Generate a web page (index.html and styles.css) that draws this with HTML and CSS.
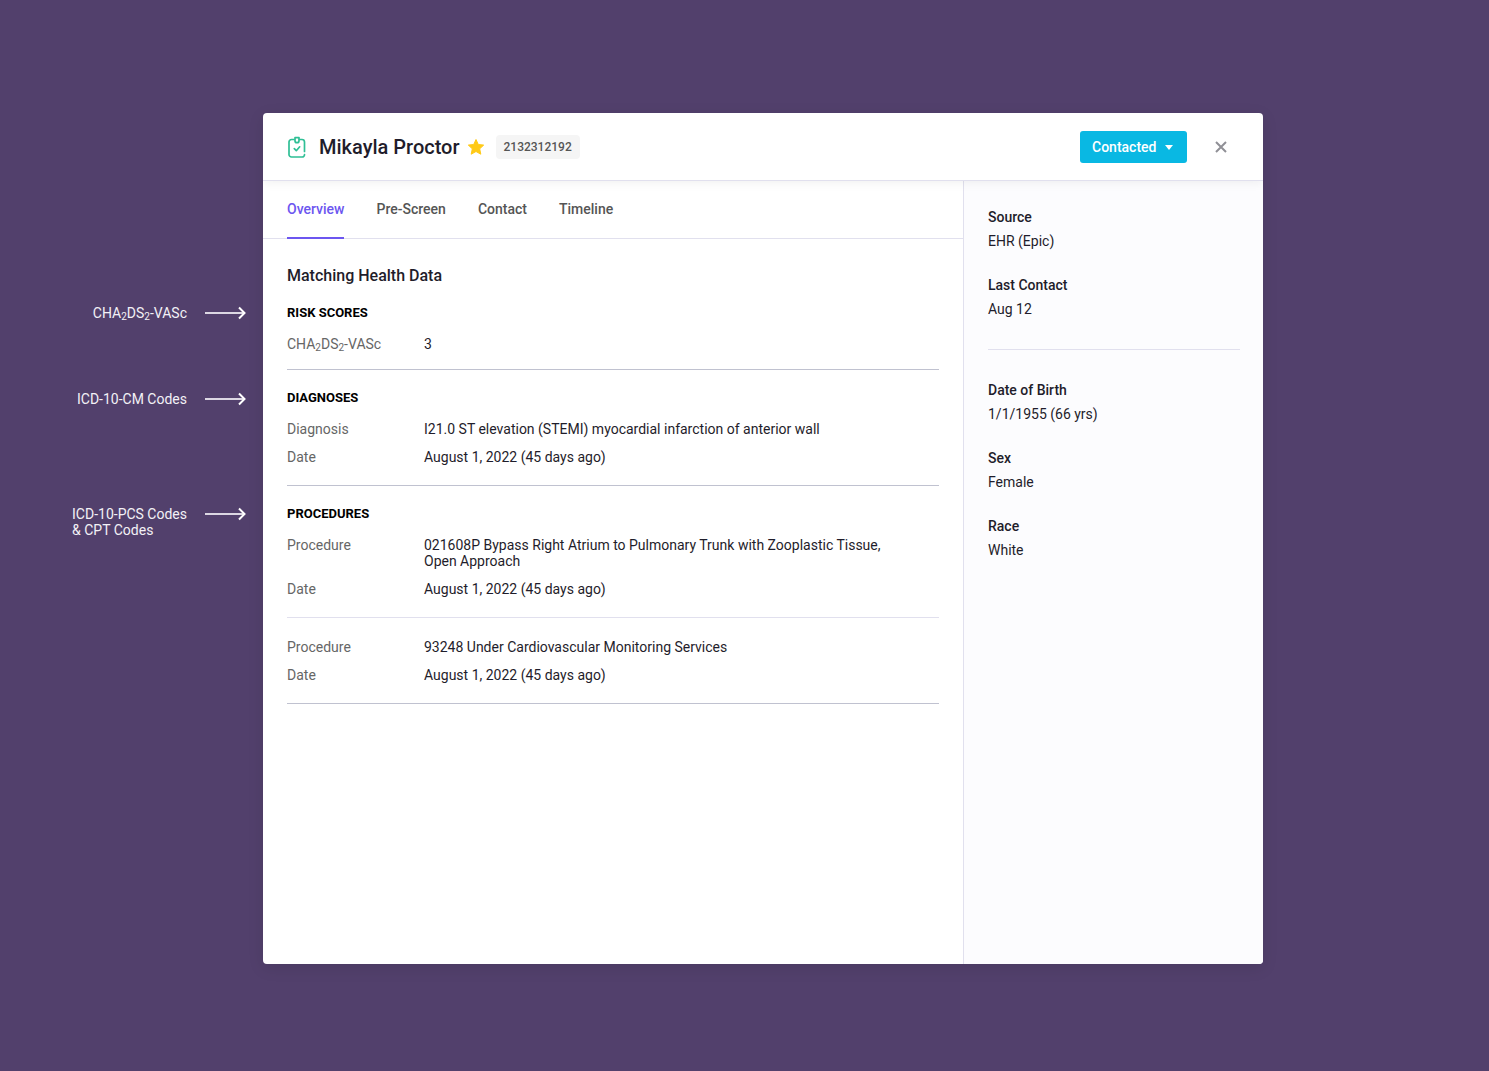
FILE: index.html
```html
<!DOCTYPE html>
<html lang="en">
<head>
    <meta charset="UTF-8">
    <meta name="viewport" content="width=device-width, initial-scale=1.0">
    <title>Mikayla Proctor</title>
    <link rel="stylesheet" href="styles.css">
</head>
<body>
    <aside class="notes">
        <div class="note">
            <p>CHA<sub>2</sub>DS<sub>2</sub>-VASc</p>
            <svg class="arrow" viewBox="0 0 42 16"><path class="shaft" d="M0 8h39"/><path d="M34 2.500 39.500 8 34 13.500"/></svg>
        </div>
        <div class="note">
            <p>ICD-10-CM Codes</p>
            <svg class="arrow" viewBox="0 0 42 16"><path class="shaft" d="M0 8h39"/><path d="M34 2.500 39.500 8 34 13.500"/></svg>
        </div>
        <div class="note">
            <p>ICD-10-PCS Codes<br>&amp; CPT Codes</p>
            <svg class="arrow" viewBox="0 0 42 16"><path class="shaft" d="M0 8h39"/><path d="M34 2.500 39.500 8 34 13.500"/></svg>
        </div>
    </aside>

    <div class="card">
        <header class="card-header">
            <svg class="clipboard" viewBox="0 0 20 22" width="20" height="22">
                <path d="M7 3.500H4.500A2.500 2.500 0 0 0 2 6v12.500A2.500 2.500 0 0 0 4.500 21h10.500a2.500 2.500 0 0 0 2.500-2.300M17.500 15.500V6A2.500 2.500 0 0 0 15 3.500H12.500"/>
                <path d="M8 1.700h4v3a2 2 0 0 1-4 0z"/>
                <path d="M7.300 12.700l2 2 3.400-3.900"/>
            </svg>
            <h1>Mikayla Proctor</h1>
            <svg class="star" viewBox="0 0 18 18" width="18" height="18">
                <path d="M9 1.500l2.300 5 5.400.6-4 3.700 1.100 5.400L9 13.500l-4.800 2.700 1.100-5.400-4-3.700 5.400-.6z"/>
            </svg>
            <span class="patient-id">2132312192</span>
            <div class="status">
                <select aria-label="Status">
                    <option>Contacted</option>
                </select>
                <svg viewBox="0 0 8 5" width="8" height="5"><path d="M0 0h8L4 5z"/></svg>
            </div>
            <button class="close" aria-label="Close">
                <svg viewBox="0 0 12 12" width="12" height="12"><path d="M1 1l10 10M11 1L1 11"/></svg>
            </button>
        </header>

        <div class="card-body">
            <main>
                <nav class="tabs">
                    <a href="#overview" class="active">Overview</a>
                    <a href="#pre-screen">Pre-Screen</a>
                    <a href="#contact">Contact</a>
                    <a href="#timeline">Timeline</a>
                </nav>
                <div class="content">
                    <h2>Matching Health Data</h2>
                    <section class="risk">
                        <h3>Risk Scores</h3>
                        <dl>
                            <dt>CHA<sub>2</sub>DS<sub>2</sub>-VASc</dt>
                            <dd>3</dd>
                        </dl>
                    </section>
                    <section>
                        <h3>Diagnoses</h3>
                        <dl>
                            <dt>Diagnosis</dt>
                            <dd>I21.0 ST elevation (STEMI) myocardial infarction of anterior wall</dd>
                            <dt>Date</dt>
                            <dd>August 1, 2022 (45 days ago)</dd>
                        </dl>
                    </section>
                    <section>
                        <h3>Procedures</h3>
                        <dl>
                            <dt>Procedure</dt>
                            <dd>021608P Bypass Right Atrium to Pulmonary Trunk with Zooplastic Tissue, Open Approach</dd>
                            <dt>Date</dt>
                            <dd>August 1, 2022 (45 days ago)</dd>
                        </dl>
                        <dl class="next">
                            <dt>Procedure</dt>
                            <dd>93248 Under Cardiovascular Monitoring Services</dd>
                            <dt>Date</dt>
                            <dd>August 1, 2022 (45 days ago)</dd>
                        </dl>
                    </section>
                </div>
            </main>

            <aside class="details">
                <dl>
                    <dt>Source</dt>
                    <dd>EHR (Epic)</dd>
                    <dt>Last Contact</dt>
                    <dd>Aug 12</dd>
                </dl>
                <dl>
                    <dt>Date of Birth</dt>
                    <dd>1/1/1955 (66 yrs)</dd>
                    <dt>Sex</dt>
                    <dd>Female</dd>
                    <dt>Race</dt>
                    <dd>White</dd>
                </dl>
            </aside>
        </div>
    </div>
</body>
</html>
```
FILE: styles.css
```css
* {
    box-sizing: border-box;
}
body {
    margin: 0;
    min-height: 100vh;
    padding: 113px 226px 107px 0;
    display: flex;
    background-color: #52406c;
    color: #1f1d2b;
    font-family: Roboto, sans-serif;
    font-size: 14px;
    line-height: 16px;
}
h1, h2, h3, p, dl, dd {
    margin: 0;
}
sub {
    font-size: 10px;
    line-height: 0;
    vertical-align: -2px;
}

/* notes beside the card */
.notes {
    flex: 0 0 263px;
    display: grid;
    grid-template-rows: 86px 115px auto;
    padding: 192px 16px 0 0;
    color: #f3f1f6;
}
.note {
    display: flex;
    justify-content: flex-end;
    gap: 18px;
}
.arrow {
    width: 42px;
    height: 16px;
    fill: none;
    stroke: white;
    stroke-width: 2;
}
.arrow .shaft {
    stroke: #dcd7e3;
}

/* card */
.card {
    flex: 1;
    min-width: 0;
    display: flex;
    flex-direction: column;
    background-color: white;
    border-radius: 4px;
    box-shadow: 0 4px 16px rgba(0, 0, 0, 0.1);
    overflow: hidden;
}
.card-header {
    position: relative;
    height: 68px;
    padding: 0 32px 0 24px;
    display: flex;
    align-items: center;
    border-bottom: 1px solid #e1e0ee;
    box-shadow: 0 2px 10px rgba(0, 0, 0, 0.06);
}
.card-header h1 {
    margin: 0 7px 0 12px;
    font-size: 20px;
    font-weight: 500;
    line-height: 24px;
}
.clipboard {
    fill: none;
    stroke: #2fbf95;
    stroke-width: 1.7;
    stroke-linecap: round;
    stroke-linejoin: round;
}
.star {
    fill: #ffca18;
    stroke: #ffca18;
    stroke-width: 1;
    stroke-linejoin: round;
}
.patient-id {
    margin-left: 11px;
    padding: 4px 8px;
    border-radius: 4px;
    background-color: #f5f5f5;
    color: #555;
    font-size: 12px;
    font-weight: 500;
}
.status {
    position: relative;
    margin-left: auto;
}
.status select {
    appearance: none;
    height: 32px;
    padding: 0 30px 0 12px;
    border: none;
    border-radius: 3px;
    background-color: #09b8e3;
    color: white;
    font: inherit;
    font-weight: 500;
    cursor: pointer;
}
.status svg {
    position: absolute;
    top: 14px;
    right: 14px;
    fill: white;
    pointer-events: none;
}
.close {
    display: flex;
    margin-left: 24px;
    padding: 4px;
    border: none;
    background: none;
    cursor: pointer;
}
.close svg {
    fill: none;
    stroke: #909096;
    stroke-width: 2;
}
.card-body {
    flex: 1;
    display: flex;
}
main {
    flex: 1;
}

/* tabs */
.tabs {
    display: flex;
    gap: 32px;
    padding: 0 24px;
    border-bottom: 1px solid #e1e0ee;
}
.tabs a {
    margin-bottom: -1px;
    padding: 20px 0;
    border-bottom: 2px solid transparent;
    color: #555;
    font-weight: 500;
    text-decoration: none;
}
.tabs a.active {
    border-color: #6c56f0;
    color: #6c56f0;
}

/* health data */
.content {
    padding: 25px 24px;
}
.content h2 {
    margin-bottom: 17px;
    font-size: 16px;
    font-weight: 500;
    line-height: 24px;
}
.content section {
    margin-bottom: 20px;
    padding-bottom: 20px;
    border-bottom: 1px solid #c0c2d0;
}
.content .risk {
    padding-bottom: 17px;
}
.content h3 {
    margin-bottom: 15px;
    color: black;
    font-size: 13px;
    font-weight: 700;
    text-transform: uppercase;
}
.content dl {
    display: grid;
    grid-template-columns: 125px 1fr;
    gap: 12px;
}
.content dt {
    color: #666;
}
.content dd {
    padding-right: 24px;
}
.content .next {
    margin-top: 20px;
    padding-top: 21px;
    border-top: 1px solid #e1e0ee;
}

/* right column */
.details {
    flex: 0 0 300px;
    padding: 28px 23px 28px 24px;
    border-left: 1px solid #e1e0ee;
    background-color: #fcfcfe;
}
.details dt {
    margin-bottom: 8px;
    font-weight: 500;
}
.details dd + dt {
    margin-top: 28px;
}
.details dl + dl {
    margin-top: 32px;
    padding-top: 32px;
    border-top: 1px solid #e1e0ee;
}
```
